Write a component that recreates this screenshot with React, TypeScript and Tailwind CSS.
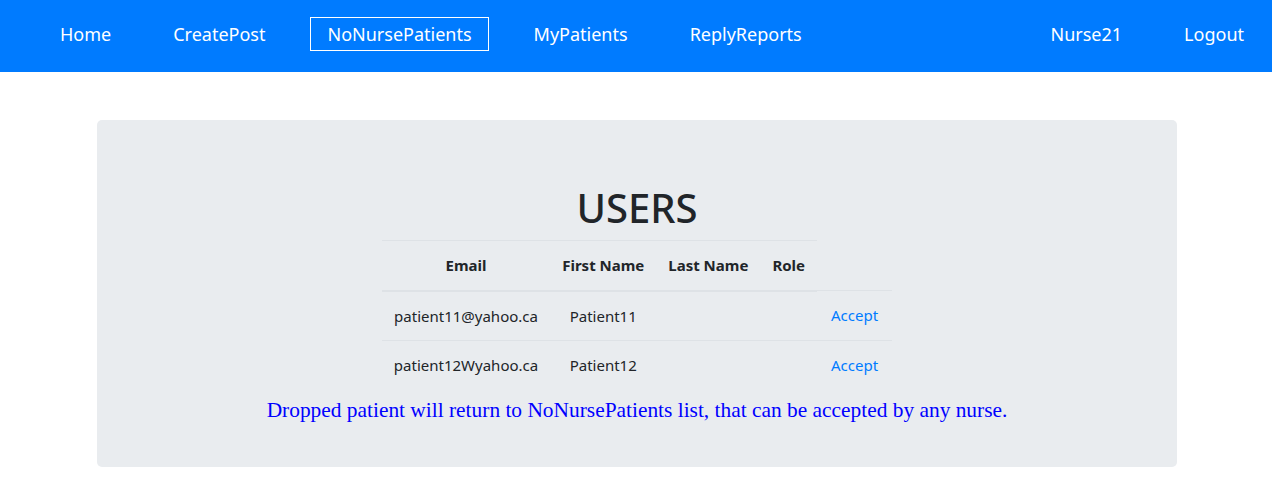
import React from "react";

const leftLinks = ["Home", "CreatePost", "NoNursePatients", "MyPatients", "ReplyReports"];
const rightLinks = ["Nurse21", "Logout"];

const patients = [
  { email: "patient11@yahoo.ca", first: "Patient11", last: "", role: "" },
  { email: "patient12Wyahoo.ca", first: "Patient12", last: "", role: "" },
];

const App = () => {
  return (
    <div className="min-h-screen bg-white" style={{ fontFamily: "'Noto Sans', 'Open Sans', sans-serif" }}>
      {/* Navbar */}
      <nav className="h-[72px] bg-[#007bff] flex items-center justify-between pl-[43px] pr-[12px] pb-[4px] text-white text-[18px]">
        <div className="flex items-center gap-[28px]">
          {leftLinks.map((link) => (
            <a
              key={link}
              className={`px-[16px] h-[34px] flex items-center border ${
                link === "NoNursePatients" ? "border-white" : "border-transparent"
              }`}
            >
              {link}
            </a>
          ))}
        </div>
        <div className="flex items-center gap-[30px]">
          {rightLinks.map((link) => (
            <a key={link} className="px-[16px] h-[34px] flex items-center">
              {link}
            </a>
          ))}
        </div>
      </nav>

      {/* Jumbotron */}
      <div className="w-[1080px] mx-auto mt-[48px] bg-[#e9ecef] rounded-[5px] pt-[64px] pb-[45px] text-[#212529] translate-x-[1px]">
        <h1 className="text-center text-[40px] font-medium leading-[48px] mb-[8px]">USERS</h1>
        <table className="mx-auto text-center text-[15px] leading-[24.5px] border-collapse">
          <thead>
            <tr>
              <th className="px-[12px] py-[12px] border-t border-b-2 border-[#dee2e6] font-bold">Email</th>
              <th className="px-[12px] py-[12px] border-t border-b-2 border-[#dee2e6] font-bold">First Name</th>
              <th className="px-[12px] py-[12px] border-t border-b-2 border-[#dee2e6] font-bold">Last Name</th>
              <th className="px-[12px] py-[12px] border-t border-b-2 border-[#dee2e6] font-bold">Role</th>
            </tr>
          </thead>
          <tbody>
            {patients.map((p, i) => (
              <tr key={p.email}>
                <td className={`px-[12px] py-[12px] border-[#dee2e6] ${i > 0 ? "border-t" : ""}`}>{p.email}</td>
                <td className={`px-[12px] py-[12px] border-[#dee2e6] ${i > 0 ? "border-t" : ""}`}>{p.first}</td>
                <td className={`px-[12px] py-[12px] border-[#dee2e6] ${i > 0 ? "border-t" : ""}`}>{p.last}</td>
                <td className={`px-[12px] py-[12px] border-[#dee2e6] ${i > 0 ? "border-t" : ""}`}>{p.role}</td>
                <td className="px-[14px] py-[12px] border-t border-[#dee2e6]">
                  <a className="text-[#007bff]">Accept</a>
                </td>
              </tr>
            ))}
          </tbody>
        </table>
        <p
          className="text-center text-[#0000ff] text-[21.4px] leading-[24px] mt-[8px]"
          style={{ fontFamily: "'Liberation Serif', serif" }}
        >
          Dropped patient will return to NoNursePatients list, that can be accepted by any nurse.
        </p>
      </div>
    </div>
  );
};

export default App;
